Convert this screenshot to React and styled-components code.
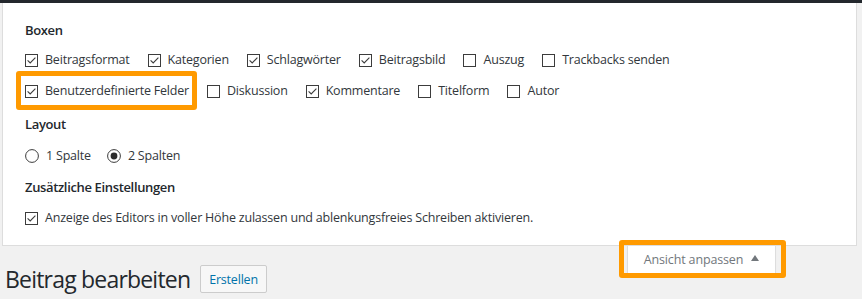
import React from "react";
import styled, { createGlobalStyle } from "styled-components";

const GlobalStyle = createGlobalStyle`
  body {
    margin: 0;
    background: #f1f1f1;
    font-family: "Open Sans", "Noto Sans", sans-serif;
    color: #32373c;
  }
`;

const boxes = [
  [
    { label: "Beitragsformat", checked: true },
    { label: "Kategorien", checked: true },
    { label: "Schlagwörter", checked: true },
    { label: "Beitragsbild", checked: true },
    { label: "Auszug", checked: false },
    { label: "Trackbacks senden", checked: false },
  ],
  [
    { label: "Benutzerdefinierte Felder", checked: true, marked: true },
    { label: "Diskussion", checked: false },
    { label: "Kommentare", checked: true },
    { label: "Titelform", checked: false },
    { label: "Autor", checked: false },
  ],
];

const CheckIcon = ({ checked }) => (
  <svg width="13" height="13" viewBox="0 0 13 13">
    <rect x="0.5" y="0.5" width="12" height="12" fill="#fff" stroke="#3c3c3c" />
    {checked && (
      <polyline
        points="2.6,6.4 5.2,9 10.4,3.6"
        fill="none"
        stroke="#3c3c3c"
        strokeWidth="1.1"
      />
    )}
  </svg>
);

const RadioIcon = ({ checked }) => (
  <svg width="14" height="14" viewBox="0 0 14 14">
    <circle cx="7" cy="7" r="6.4" fill="#fff" stroke="#3c3c3c" />
    {checked && <circle cx="7" cy="7" r="3.4" fill="#2b2b2b" />}
  </svg>
);

const Option = ({ checked, radio, marked, children }) => (
  <OptionLabel>
    {radio ? <RadioIcon checked={checked} /> : <CheckIcon checked={checked} />}
    <span>{children}</span>
    {marked && <Marker $top={-10} $left={-9} $right={-8} $bottom={-9} />}
  </OptionLabel>
);

const App = () => (
  <>
    <GlobalStyle />
    <AdminBar />
    <Panel>
      <Legend>Boxen</Legend>
      {boxes.map((row, i) => (
        <OptionRow key={i} $mt={i === 0 ? 10 : 11}>
          {row.map((o) => (
            <Option key={o.label} checked={o.checked} marked={o.marked}>
              {o.label}
            </Option>
          ))}
        </OptionRow>
      ))}
      <Legend $mt={13}>Layout</Legend>
      <OptionRow $mt={12} $gap={16}>
        <Option radio>1 Spalte</Option>
        <Option radio checked>
          2 Spalten
        </Option>
      </OptionRow>
      <Legend $mt={11}>Zusätzliche Einstellungen</Legend>
      <OptionRow $mt={11}>
        <Option checked>
          Anzeige des Editors in voller Höhe zulassen und ablenkungsfreies
          Schreiben aktivieren.
        </Option>
      </OptionRow>
    </Panel>
    <PageHead>
      <ScreenTab>
        Ansicht anpassen <Arrow />
        <Marker $top={-6} $left={-9} $right={-11} $bottom={-5} />
      </ScreenTab>
      <TitleRow>
        <Title>Beitrag bearbeiten</Title>
        <AddButton>Erstellen</AddButton>
      </TitleRow>
    </PageHead>
  </>
);

const AdminBar = styled.div`
  height: 3px;
  background: #23282d;
`;

const Panel = styled.div`
  display: flex;
  flex-direction: column;
  margin: 0 5px 0 2px;
  padding: 17px 0 17px 22px;
  background: #fff;
  border: 1px solid #ddd;
  border-top: none;
`;

const Legend = styled.div`
  height: 20px;
  line-height: 20px;
  margin-top: ${(p) => p.$mt || 0}px;
  font-size: 13px;
  font-weight: 600;
  letter-spacing: -0.35px;
  color: #23282d;
`;

const OptionRow = styled.div`
  display: flex;
  align-items: center;
  gap: ${(p) => p.$gap || 18}px;
  height: 20px;
  margin-top: ${(p) => p.$mt || 0}px;
`;

const OptionLabel = styled.label`
  position: relative;
  display: flex;
  align-items: center;
  gap: 7px;
  font-size: 12.5px;
  line-height: 20px;
  letter-spacing: -0.2px;
  color: #32373c;
  white-space: nowrap;

  svg {
    flex-shrink: 0;
  }
`;

const Marker = styled.span`
  position: absolute;
  top: ${(p) => p.$top}px;
  left: ${(p) => p.$left}px;
  right: ${(p) => p.$right}px;
  bottom: ${(p) => p.$bottom}px;
  border: 5px solid #ff9a00;
  border-radius: 3px;
  pointer-events: none;
`;

const PageHead = styled.div`
  padding: 0 5px;
`;

const ScreenTab = styled.div`
  position: relative;
  float: right;
  display: flex;
  align-items: center;
  justify-content: center;
  gap: 8px;
  width: 147px;
  height: 27px;
  margin-right: 81px;
  background: #fff;
  border: 1px solid #ddd;
  border-top: none;
  box-shadow: 0 1px 1px rgba(0, 0, 0, 0.04);
  font-size: 12.5px;
  letter-spacing: -0.15px;
  color: #72777c;
`;

const Arrow = styled.span`
  width: 0;
  height: 0;
  margin-top: -3px;
  border-left: 4.5px solid transparent;
  border-right: 4.5px solid transparent;
  border-bottom: 6px solid #72777c;
`;

const TitleRow = styled.div`
  display: flex;
  align-items: center;
  gap: 10px;
  padding-top: 18px;
`;

const Title = styled.h1`
  margin: 0;
  font-size: 23px;
  font-weight: 400;
  line-height: 30px;
  letter-spacing: -0.8px;
  color: #23282d;
`;

const AddButton = styled.button`
  height: 28px;
  padding: 0 8px;
  background: #f7f7f7;
  border: 1px solid #ccc;
  border-radius: 2px;
  font-family: inherit;
  font-size: 12.5px;
  letter-spacing: -0.2px;
  color: #0073aa;
`;

export default App;
